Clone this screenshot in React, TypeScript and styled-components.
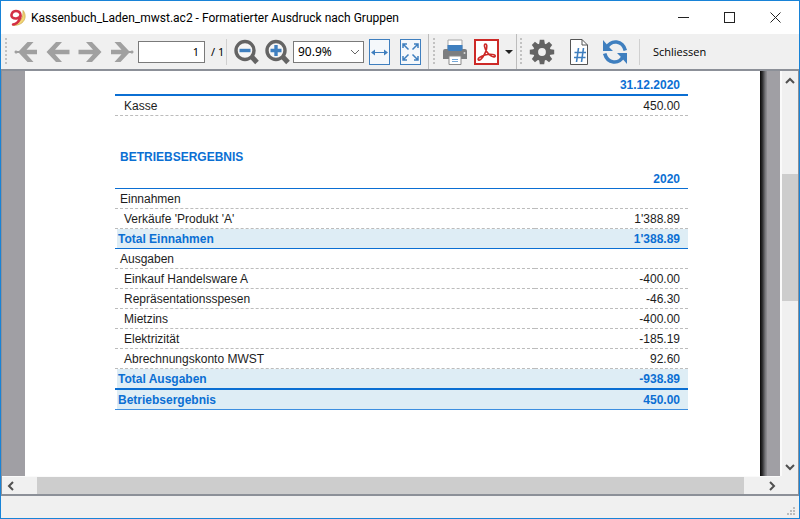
import React from "react";
import styled, { createGlobalStyle } from "styled-components";

const BLUE = "#0b6fd3";
const ICON_BLUE = "#3f7fbf";
const GRAY_ICON = "#646464";
const UI_FONT = '"Noto Sans", "Open Sans", sans-serif';

const GlobalStyle = createGlobalStyle`
  *, *::before, *::after { box-sizing: border-box; }
  html, body, #root { height: 100%; }
  body { margin: 0; overflow: hidden; background: #f0f0f0; }
  button, input, select { font: inherit; color: inherit; }
  svg { display: block; }
`;

const Window = styled.div`
  display: flex;
  flex-direction: column;
  height: 100vh;
  border: 1px solid #1883d7;
  background: #f0f0f0;
  font-family: ${UI_FONT};
  color: #000;
`;

const TitleBar = styled.header`
  display: flex;
  align-items: center;
  flex: none;
  height: 33px;
  padding: 0 1px 0 8px;
  background: #fff;
`;

const Title = styled.h1`
  flex: 1;
  min-width: 0;
  margin: 0 0 0 4px;
  overflow: hidden;
  font-family: Roboto, "Open Sans", sans-serif;
  font-size: 12px;
  font-weight: 400;
  line-height: 20px;
  white-space: nowrap;
`;

const CaptionButton = styled.button`
  display: flex;
  align-items: center;
  justify-content: center;
  width: 46px;
  height: 30px;
  padding: 0;
  border: 0;
  background: transparent;
`;

const Toolbar = styled.div`
  display: flex;
  align-items: center;
  flex: none;
  height: 37px;
  padding-left: 4px;
  border-bottom: 2px solid #8c9098;
  font-size: 12px;
  line-height: 16px;
`;

const Group = styled.div<{ $gap: number; $left?: number; $right?: number }>`
  display: flex;
  align-items: center;
  gap: ${(p) => p.$gap}px;
  margin: 0 ${(p) => p.$right ?? 0}px 0 ${(p) => p.$left ?? 0}px;
`;

const Grip = styled.span`
  flex: none;
  width: 3px;
  height: 28px;
  background: radial-gradient(circle at 1px 1px, #c2c2c2 1px, transparent 1px) 0 0 / 3px 4px;
`;

const Separator = styled.span<{ $tall?: boolean }>`
  flex: none;
  width: 1px;
  height: ${(p) => (p.$tall ? 35 : 26)}px;
  background: ${(p) => (p.$tall ? "#bdbdbd" : "#d0d0d0")};
`;

const ToolButton = styled.button<{ $w?: number }>`
  display: flex;
  align-items: center;
  justify-content: center;
  flex: none;
  width: ${(p) => p.$w ?? 24}px;
  height: 28px;
  padding: 0;
  border: 0;
  background: transparent;
`;

const PageInput = styled.input`
  width: 67px;
  height: 22px;
  padding: 0 5px;
  border: 1px solid #7a7a7a;
  border-radius: 0;
  background: #fff;
  font-size: 11px;
  text-align: right;
`;

const PageCount = styled.span`
  width: 21px;
  padding-left: 6px;
  font-size: 11px;
  white-space: nowrap;
`;

const SelectBox = styled.div`
  display: grid;
  align-items: center;
  width: 71px;
  height: 22px;
  > * { grid-area: 1 / 1; }
  > svg { justify-self: end; margin-right: 4px; pointer-events: none; }
`;

const ZoomSelect = styled.select`
  width: 100%;
  height: 22px;
  padding: 0 4px;
  appearance: none;
  border: 1px solid #7a7a7a;
  border-radius: 0;
  background: #fff;
`;

const CloseButton = styled.button`
  height: 28px;
  padding: 0;
  border: 0;
  background: transparent;
  font-family: "Open Sans", sans-serif;
  font-size: 11px;
`;

const Viewer = styled.main`
  display: grid;
  grid-template: minmax(0, 1fr) 18px / minmax(0, 1fr) 18px;
  flex: 1;
  min-height: 0;
  border: solid #8c9098;
  border-width: 0 1px 2px;
`;

const Canvas = styled.div`
  display: flex;
  min-height: 0;
  padding: 0 13px 0 23px;
  overflow: hidden;
  background: #a09fa4;
`;

const Paper = styled.article`
  flex: 1;
  padding: 4px 72px 0 90px;
  background: #fff;
  font-family: "Liberation Sans", Arial, sans-serif;
  font-size: 12px;
  line-height: 18px;
  color: #1c1c1c;
`;

const PaperShadow = styled.div`
  flex: none;
  width: 7px;
  background: linear-gradient(90deg, #080808, #303032 35%, #77777b 75%, #939297);
`;

const ReportTable = styled.table`
  width: 100%;
  border-collapse: separate;
  border-spacing: 0;
`;

type RowKind = "head" | "strongHead" | "group" | "item" | "total" | "grand" | "last";

const isTotal = (k: RowKind) => k === "total" || k === "grand" || k === "last";
const isHead = (k: RowKind) => k === "head" || k === "strongHead";
const rules: Record<RowKind, string> = {
  head: `1px solid ${BLUE}`,
  strongHead: `2px solid ${BLUE}`,
  group: "1px dashed #bcbcbc",
  item: "1px dashed #bcbcbc",
  total: `1px solid ${BLUE}`,
  grand: `2px solid ${BLUE}`,
  last: "1px solid #3d8fe0",
};
const isTall = (k: RowKind) => k === "strongHead" || k === "grand";

const Row = styled.tr<{ $kind: RowKind }>`
  > * {
    height: ${(p) => (isTall(p.$kind) ? 21 : 20)}px;
    padding: 0 8px 0 0;
    border-bottom: ${(p) => rules[p.$kind]};
    background: ${(p) => (isTotal(p.$kind) ? "#deedf5" : "transparent")};
    color: ${(p) => (isTotal(p.$kind) || isHead(p.$kind) ? BLUE : "inherit")};
    font-weight: ${(p) => (isTotal(p.$kind) || isHead(p.$kind) ? 700 : 400)};
    text-align: right;
  }
  > :first-child {
    padding: 0 0 0 ${(p) => (isTotal(p.$kind) ? 3 : p.$kind === "group" ? 5 : 9)}px;
    background: ${(p) => (isTotal(p.$kind) ? "linear-gradient(90deg, #fff 2px, #deedf5 2px)" : "transparent")};
    text-align: left;
  }
`;

const SectionTitle = styled.h2`
  margin: 32px 0 3px 5px;
  color: ${BLUE};
  font-size: 12px;
  font-weight: 700;
  line-height: 18px;
`;

const ScrollColumn = styled.div`
  display: flex;
  flex-direction: column;
  align-items: center;
  border-left: 2px solid #fafafa;
  background: #f0f0f0;
`;

const ScrollRow = styled.div`
  display: flex;
  align-items: center;
  border-top: 1px solid #fafafa;
  background: #f0f0f0;
`;

const Corner = styled.div`
  background: #f0f0f0;
`;

const ScrollButton = styled.button<{ $w: number; $h: number }>`
  display: flex;
  align-items: center;
  justify-content: center;
  flex: none;
  width: ${(p) => p.$w}px;
  height: ${(p) => p.$h}px;
  padding: 0;
  border: 0;
  background: transparent;
`;

const Track = styled.div<{ $vertical?: boolean }>`
  display: flex;
  flex: 1;
  flex-direction: ${(p) => (p.$vertical ? "column" : "row")};
  align-self: stretch;
`;

const Thumb = styled.div<{ $size: number }>`
  flex: ${(p) => p.$size} 1 0;
  background: #cdcdcd;
`;

const Space = styled.div<{ $size: number }>`
  flex: ${(p) => p.$size} 1 0;
`;

const StatusBar = styled.footer`
  display: flex;
  align-items: flex-end;
  justify-content: flex-end;
  flex: none;
  height: 22px;
  padding: 0 3px 2px;
`;

function Logo() {
  return (
    <svg width="18" height="18" viewBox="0 0 18 18" fill="none">
      <path d="M14 1.500C18 6 17 16 4.500 16.500C11 14 14.500 9 14 1.500Z" fill="#f3d775" stroke="#cda84a" strokeWidth="0.800" />
      <path d="M11.500 6C11 9.500 6 10.500 3.500 8.500C1.200 6.500 3 2 7 2C11.500 2 12.500 6 11 9.500C9.500 13 7.500 15 4 15.500" stroke="#d42f45" strokeWidth="2.500" strokeLinecap="round" />
    </svg>
  );
}

function Arrow({ right, end }: { right?: boolean; end?: boolean }) {
  return (
    <svg width="24" height="24" viewBox="0 0 24 24" fill="#a0a0a0">
      <g transform={right ? "translate(24 0) scale(-1 1)" : undefined}>
        {end ? (
          <path d="M0.500 12A1.600 1.600 0 0 1 3.300 11H5L13.500 2H19.500L12.500 9.800H23V14.200H12.500L19.500 22H13.500L5 13H3.300A1.600 1.600 0 0 1 0.500 12Z" />
        ) : (
          <path d="M0.500 12L10 2H16L9 9.800H23.500V14.200H9L16 22H10Z" />
        )}
      </g>
    </svg>
  );
}

function Magnifier({ plus }: { plus?: boolean }) {
  return (
    <svg width="25" height="26" viewBox="0 0 25 26" fill="none">
      <path d="M17 17L23 23.500" stroke={GRAY_ICON} strokeWidth="5" />
      <circle cx="11" cy="11.500" r="9" fill="#f6f6f6" stroke={GRAY_ICON} strokeWidth="3.400" />
      <path d={plus ? "M5.500 11.500H16.500M11 6V17" : "M5.500 11.500H16.500"} stroke={ICON_BLUE} strokeWidth="3.400" />
    </svg>
  );
}

function FitIcon({ page }: { page?: boolean }) {
  return (
    <svg width="21" height="26" viewBox="0 0 21 26" fill="none" stroke={ICON_BLUE}>
      <rect x="0.500" y="0.500" width="20" height="25" fill="#f5f8fb" />
      {page ? (
        <path d="M8.500 10.500L3 5M3 9V5H7M12.500 10.500L18 5M14 5H18V9M8.500 15.500L3 21M3 17V21H7M12.500 15.500L18 21M14 21H18V17" strokeWidth="1.500" />
      ) : (
        <g>
          <path d="M4 13.500H17" />
          <path d="M2 13.500L6 10.500V16.500ZM19 13.500L15 10.500V16.500Z" fill={ICON_BLUE} stroke="none" />
        </g>
      )}
    </svg>
  );
}

function PrinterIcon() {
  return (
    <svg width="26" height="26" viewBox="0 0 26 26">
      <path d="M6 1H20V10H6Z" fill="#fff" stroke="#a5a5a5" />
      <path d="M3 10H23Q25 10 25 12V20H1V12Q1 10 3 10Z" fill="#7c7e80" />
      <path d="M5.500 6H20.500V10Q20.500 12 18.500 12H7.500Q5.500 12 5.500 10Z" fill={ICON_BLUE} />
      <path d="M7 17H19V25.500H7Z" fill="#fff" stroke="#8b8b8b" />
      <path d="M10 20.500H16M10 22.500H16" stroke="#75a7d7" />
      <circle cx="22.500" cy="14" r="1" fill="#d8d8d8" />
    </svg>
  );
}

function PdfIcon() {
  return (
    <svg width="25" height="26" viewBox="0 0 25 26" fill="none" stroke="#cd2927">
      <rect x="1" y="1" width="23" height="24" fill="#fff" strokeWidth="2" />
      <path d="M11.500 5C9.500 5 10.500 9.500 13 13C15 16 19 19 21 17.500C22.500 15.500 16 14.500 11 16C6 17.500 3 20 4.500 21C7 22 11.500 15 12.500 10C13 7 13 5 11.500 5Z" strokeWidth="1.600" />
    </svg>
  );
}

function GearIcon() {
  const teeth = [0, 45, 90, 135, 180, 225, 270, 315];
  return (
    <svg width="26" height="26" viewBox="0 0 26 26" fill={GRAY_ICON}>
      {teeth.map((a) => (
        <path key={a} d="M10.800 0.800H15.200L16 6H10Z" transform={`rotate(${a} 13 13)`} />
      ))}
      <circle cx="13" cy="13" r="6.300" fill="none" stroke={GRAY_ICON} strokeWidth="4.800" />
    </svg>
  );
}

function NumberIcon() {
  return (
    <svg width="18" height="26" viewBox="0 0 18 26" fill="none">
      <path d="M0.500 0.500H12L17.500 6V25.500H0.500Z" fill="#fff" stroke="#555" />
      <path d="M12 0.500V6H17.500" stroke="#555" />
      <path d="M8.500 9L6.500 23M13.500 9L11.500 23M4.500 13.500H16M4 18.500H15.500" stroke={ICON_BLUE} strokeWidth="1.600" />
    </svg>
  );
}

function RefreshIcon() {
  return (
    <svg width="26" height="26" viewBox="0 0 26 26" fill="none" stroke={ICON_BLUE}>
      <path d="M5 8.500C9 0.500 20.500 1 23.300 11.500" strokeWidth="3.600" />
      <path d="M21 17.500C17 25.500 5.500 25 2.700 14.500" strokeWidth="3.600" />
      <path d="M1 1V12H11L7.500 8.500L4.500 5Z" fill={ICON_BLUE} stroke="none" />
      <path d="M25 25V14H15L18.500 17.500L21.500 21Z" fill={ICON_BLUE} stroke="none" />
    </svg>
  );
}

function Chevron({ angle = 0, color = "#505050", width = 2 }: { angle?: number; color?: string; width?: number }) {
  return (
    <svg width="10" height="10" viewBox="0 0 10 10" fill="none">
      <path d="M1 3L5 7L9 3" stroke={color} strokeWidth={width} transform={`rotate(${angle} 5 5)`} />
    </svg>
  );
}

const rows: [string, string, RowKind][] = [
  ["", "2020", "head"],
  ["Einnahmen", "", "group"],
  ["Verkäufe 'Produkt 'A'", "1'388.89", "item"],
  ["Total Einnahmen", "1'388.89", "total"],
  ["Ausgaben", "", "group"],
  ["Einkauf Handelsware A", "-400.00", "item"],
  ["Repräsentationsspesen", "-46.30", "item"],
  ["Mietzins", "-400.00", "item"],
  ["Elektrizität", "-185.19", "item"],
  ["Abrechnungskonto MWST", "92.60", "item"],
  ["Total Ausgaben", "-938.89", "grand"],
  ["Betriebsergebnis", "450.00", "last"],
];

export default function App() {
  return (
    <Window>
      <GlobalStyle />
      <TitleBar>
        <Logo />
        <Title>Kassenbuch_Laden_mwst.ac2 - Formatierter Ausdruck nach Gruppen</Title>
        <CaptionButton aria-label="Minimize">
          <svg width="11" height="11" stroke="#222"><path d="M0 5.500H11" /></svg>
        </CaptionButton>
        <CaptionButton aria-label="Maximize">
          <svg width="11" height="11" fill="none" stroke="#222"><rect x="0.500" y="0.500" width="10" height="10" /></svg>
        </CaptionButton>
        <CaptionButton aria-label="Close">
          <svg width="11" height="11" stroke="#222"><path d="M0.500 0.500L10.500 10.500M10.500 0.500L0.500 10.500" /></svg>
        </CaptionButton>
      </TitleBar>

      <Toolbar role="toolbar">
        <Grip />
        <Group $gap={8} $left={6} $right={4}>
          <ToolButton aria-label="First page"><Arrow end /></ToolButton>
          <ToolButton aria-label="Previous page"><Arrow /></ToolButton>
          <ToolButton aria-label="Next page"><Arrow right /></ToolButton>
          <ToolButton aria-label="Last page"><Arrow right end /></ToolButton>
        </Group>
        <PageInput aria-label="Page" defaultValue="1" />
        <PageCount>/ 1</PageCount>
        <Separator />
        <Group $gap={5} $left={6} $right={3}>
          <ToolButton $w={26} aria-label="Zoom out"><Magnifier /></ToolButton>
          <ToolButton $w={26} aria-label="Zoom in"><Magnifier plus /></ToolButton>
        </Group>
        <SelectBox>
          <ZoomSelect aria-label="Zoom" defaultValue="90.9%"><option>90.9%</option></ZoomSelect>
          <Chevron color="#666" width={1} />
        </SelectBox>
        <Group $gap={10} $left={5} $right={7}>
          <ToolButton $w={21} aria-label="Fit width"><FitIcon /></ToolButton>
          <ToolButton $w={21} aria-label="Fit page"><FitIcon page /></ToolButton>
        </Group>
        <Separator $tall />
        <Group $gap={6} $left={4} $right={3}>
          <Grip />
          <ToolButton $w={26} aria-label="Print"><PrinterIcon /></ToolButton>
          <ToolButton $w={25} aria-label="Export PDF"><PdfIcon /></ToolButton>
          <ToolButton $w={8} aria-label="Export options">
            <svg width="8" height="4" fill="#222"><path d="M0 0H8L4 4Z" /></svg>
          </ToolButton>
        </Group>
        <Separator $tall />
        <Group $gap={6} $left={3} $right={10}>
          <Grip />
          <ToolButton $w={26} aria-label="Settings"><GearIcon /></ToolButton>
        </Group>
        <Group $gap={14} $left={5} $right={11}>
          <ToolButton $w={18} aria-label="Numbering"><NumberIcon /></ToolButton>
          <ToolButton $w={26} aria-label="Refresh"><RefreshIcon /></ToolButton>
        </Group>
        <Separator />
        <Group $gap={0} $left={13}>
          <CloseButton>Schliessen</CloseButton>
        </Group>
      </Toolbar>

      <Viewer>
        <Canvas>
          <Paper>
            <ReportTable>
              <tbody>
                <Row $kind="strongHead"><td /><th scope="col">31.12.2020</th></Row>
                <Row $kind="item"><td>Kasse</td><td>450.00</td></Row>
              </tbody>
            </ReportTable>
            <SectionTitle>BETRIEBSERGEBNIS</SectionTitle>
            <ReportTable>
              <tbody>
                {rows.map(([label, value, kind]) => (
                  <Row key={label} $kind={kind}>
                    <td>{label}</td>
                    {kind === "head" ? <th scope="col">{value}</th> : <td>{value}</td>}
                  </Row>
                ))}
              </tbody>
            </ReportTable>
          </Paper>
          <PaperShadow />
        </Canvas>
        <ScrollColumn>
          <ScrollButton $w={16} $h={20} aria-label="Scroll up"><Chevron angle={180} /></ScrollButton>
          <Track $vertical>
            <Space $size={83} />
            <Thumb $size={126} />
            <Space $size={157} />
          </Track>
          <ScrollButton $w={16} $h={18} aria-label="Scroll down"><Chevron /></ScrollButton>
        </ScrollColumn>
        <ScrollRow>
          <ScrollButton $w={18} $h={17} aria-label="Scroll left"><Chevron angle={90} /></ScrollButton>
          <Track>
            <Space $size={17} />
            <Thumb $size={707} />
            <Space $size={19} />
          </Track>
          <ScrollButton $w={17} $h={17} aria-label="Scroll right"><Chevron angle={-90} /></ScrollButton>
        </ScrollRow>
        <Corner />
      </Viewer>

      <StatusBar>
        <svg width="9" height="9" fill="#bcbcbc">
          <path d="M6 0h2v2h-2zM3 3h2v2h-2zM6 3h2v2h-2zM0 6h2v2h-2zM3 6h2v2h-2zM6 6h2v2h-2z" />
        </svg>
      </StatusBar>
    </Window>
  );
}
